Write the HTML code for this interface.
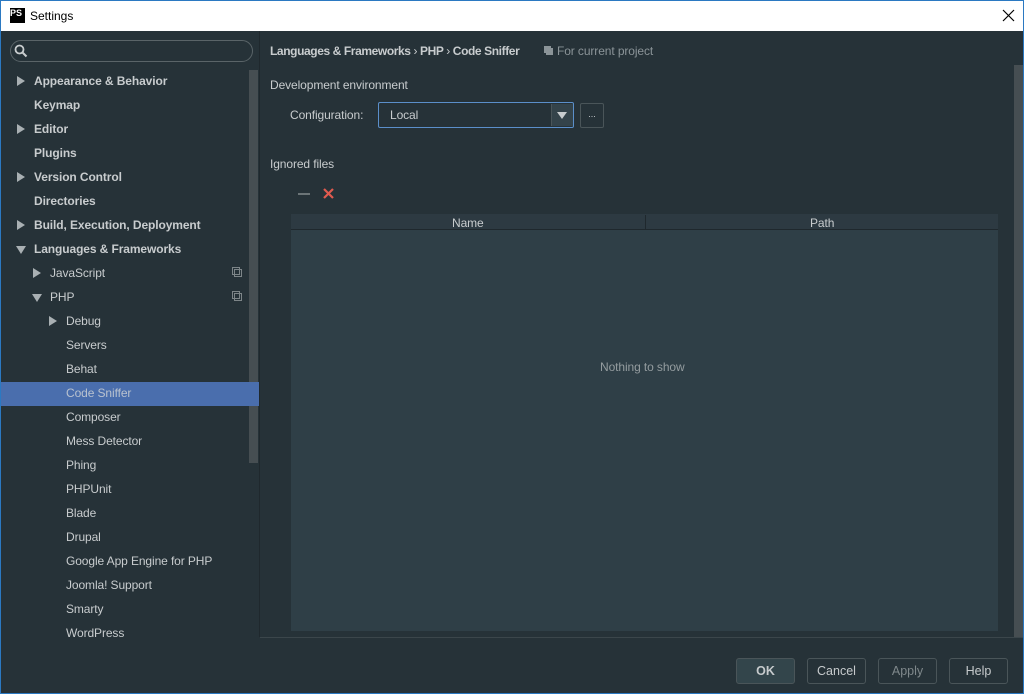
<!DOCTYPE html><html><head><style>
body{margin:0;width:1024px;height:694px;overflow:hidden;font-family:"Liberation Sans",sans-serif;font-size:12px;}
.win{position:absolute;left:0;top:0;width:1022px;height:692px;border:1px solid #2b79c2;background:#263238;}
.title{position:absolute;left:0;top:0;width:1022px;height:30px;background:#fff;color:#000;}
.abs{position:absolute;}
.side{position:absolute;left:0;top:30px;width:258px;height:606px;background:#263238;border-right:1px solid #1f282d;overflow:hidden;}
.it{position:absolute;color:#c8ccce;font-size:12px;letter-spacing:-0.1px;}
.b{font-weight:bold;}
.tri{position:absolute;width:0;height:0;}
.tr{border-top:5px solid transparent;border-bottom:5px solid transparent;border-left:8px solid #a9b0b3;}
.td{border-left:5px solid transparent;border-right:5px solid transparent;border-top:8px solid #a9b0b3;}
.btn{position:absolute;top:657px;height:24px;border:1px solid #4a5559;border-radius:3px;color:#c6cacc;text-align:center;line-height:24px;font-size:12.5px;}
</style></head><body><div class="win">
<div class="title"><div class="abs" style="left:9px;top:7px;width:15px;height:15px;background:#000;color:#fff;font-size:9px;font-weight:bold;line-height:10px;">PS</div><div class="abs" style="left:29px;top:8px;font-size:12px;">Settings</div>
<svg class="abs" style="left:1001px;top:8px" width="13" height="13"><path d="M1 1L12 12M12 1L1 12" stroke="#000" stroke-width="1.2"/></svg></div>
<div class="side">
<div class="abs" style="left:9px;top:9px;width:241px;height:20px;border:1px solid #5a6468;border-radius:11px;"></div>
<svg class="abs" style="left:13px;top:13px" width="14" height="14"><circle cx="5.5" cy="5.5" r="4" stroke="#c8ccce" stroke-width="1.8" fill="none"/><line x1="8.5" y1="8.5" x2="12.5" y2="12.5" stroke="#c8ccce" stroke-width="2"/></svg>
<div class="abs" style="left:248px;top:39px;width:9px;height:393px;background:#464e52;"></div>
<div class="abs" style="left:0;top:351px;width:258px;height:24px;background:#4a6ead;"></div>
<div class="tri tr" style="left:16px;top:45px"></div><div class="it b" style="left:33px;top:43px">Appearance &amp; Behavior</div>
<div class="it b" style="left:33px;top:67px">Keymap</div>
<div class="tri tr" style="left:16px;top:93px"></div><div class="it b" style="left:33px;top:91px">Editor</div>
<div class="it b" style="left:33px;top:115px">Plugins</div>
<div class="tri tr" style="left:16px;top:141px"></div><div class="it b" style="left:33px;top:139px">Version Control</div>
<div class="it b" style="left:33px;top:163px">Directories</div>
<div class="tri tr" style="left:16px;top:189px"></div><div class="it b" style="left:33px;top:187px">Build, Execution, Deployment</div>
<div class="tri td" style="left:15px;top:215px"></div><div class="it b" style="left:33px;top:211px">Languages &amp; Frameworks</div>
<div class="tri tr" style="left:32px;top:237px"></div><div class="it" style="left:49px;top:235px">JavaScript</div>
<div class="tri td" style="left:31px;top:263px"></div><div class="it" style="left:49px;top:259px">PHP</div>
<svg class="abs" style="left:231px;top:236px" width="10" height="10"><path d="M0.5 0.5H7.5V7.5H0.5Z M2.5 2.5H9.5V9.5H2.5Z" stroke="#7d8588" fill="none"/></svg>
<svg class="abs" style="left:231px;top:260px" width="10" height="10"><path d="M0.5 0.5H7.5V7.5H0.5Z M2.5 2.5H9.5V9.5H2.5Z" stroke="#7d8588" fill="none"/></svg>
<div class="tri tr" style="left:48px;top:285px"></div><div class="it" style="left:65px;top:283px">Debug</div>
<div class="it" style="left:65px;top:307px">Servers</div>
<div class="it" style="left:65px;top:331px">Behat</div>
<div class="it" style="left:65px;top:355px;color:#b9c2cf">Code Sniffer</div>
<div class="it" style="left:65px;top:379px">Composer</div>
<div class="it" style="left:65px;top:403px">Mess Detector</div>
<div class="it" style="left:65px;top:427px">Phing</div>
<div class="it" style="left:65px;top:451px">PHPUnit</div>
<div class="it" style="left:65px;top:475px">Blade</div>
<div class="it" style="left:65px;top:499px">Drupal</div>
<div class="it" style="left:65px;top:523px">Google App Engine for PHP</div>
<div class="it" style="left:65px;top:547px">Joomla! Support</div>
<div class="it" style="left:65px;top:571px">Smarty</div>
<div class="it" style="left:65px;top:595px">WordPress</div>
</div>
<div class="it b" style="left:269px;top:43px;letter-spacing:-0.4px">Languages &amp; Frameworks <span style="font-weight:normal">›</span> PHP <span style="font-weight:normal">›</span> Code Sniffer</div>
<svg class="abs" style="left:543px;top:45px" width="9" height="9"><path d="M0.5 0.5H6.5V6.5H0.5Z M2.5 2.5H8.5V8.5H2.5Z" stroke="#8b9498" fill="#8b9498"/></svg>
<div class="it" style="left:556px;top:43px;color:#8b9498">For current project</div>
<div class="it" style="left:269px;top:77px">Development environment</div>
<div class="it" style="left:289px;top:107px">Configuration:</div>
<div class="abs" style="left:377px;top:101px;width:194px;height:24px;border:1px solid #5b8fca;border-radius:2px;background:#263238;"></div>
<div class="abs" style="left:550px;top:103px;width:21px;height:22px;background:#34434a;border-left:1px solid #4a5559;"></div>
<div class="tri td" style="left:556px;top:111px;border-left-width:5px;border-right-width:5px;border-top-width:7px;border-top-color:#c8ccce"></div>
<div class="it" style="left:389px;top:107px">Local</div>
<div class="abs" style="left:579px;top:102px;width:22px;height:23px;border:1px solid #4a5559;border-radius:2px;color:#c8ccce;font-size:9px;text-align:center;line-height:20px;">...</div>
<div class="it" style="left:269px;top:156px">Ignored files</div>
<div class="abs" style="left:297px;top:192px;width:12px;height:2px;background:#6b7477"></div>
<svg class="abs" style="left:322px;top:187px" width="11" height="11"><path d="M1 1L10 10M10 1L1 10" stroke="#e05a4f" stroke-width="2.2"/></svg>
<div class="abs" style="left:290px;top:213px;width:707px;height:417px;background:#2f3f47;"></div>
<div class="abs" style="left:290px;top:213px;width:707px;height:15px;background:#2d3a42;border-bottom:1px solid #1f282d;"></div>
<div class="abs" style="left:644px;top:214px;width:1px;height:14px;background:#1f282d"></div>
<div class="it" style="left:451px;top:215px;font-size:12px">Name</div>
<div class="it" style="left:809px;top:215px;font-size:12px">Path</div>
<div class="it" style="left:599px;top:359px;color:#949c9f">Nothing to show</div>
<div class="abs" style="left:1013px;top:64px;width:9px;height:572px;background:#464e52;"></div>
<div class="abs" style="left:259px;top:636px;width:763px;height:1px;background:#3b464b"></div>
<div class="btn" style="left:735px;width:57px;background:#33454b;font-weight:bold;">OK</div>
<div class="btn" style="left:806px;width:57px;">Cancel</div>
<div class="btn" style="left:877px;width:57px;color:#7f888b">Apply</div>
<div class="btn" style="left:948px;width:57px;">Help</div>
</div></body></html>
